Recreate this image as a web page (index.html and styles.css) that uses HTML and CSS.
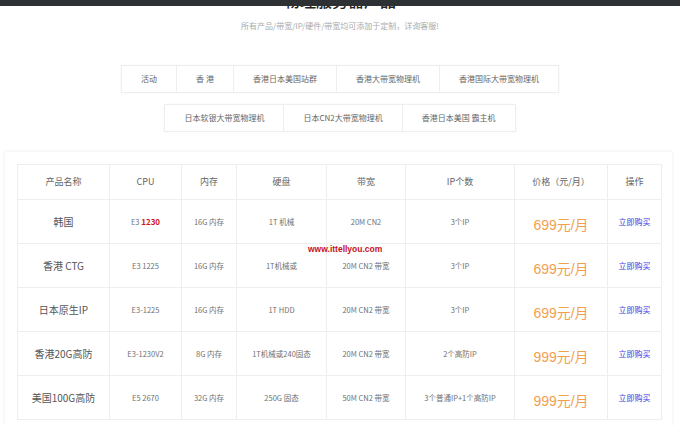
FILE: index.html
```html
<!DOCTYPE html>
<html lang="zh">
<head>
<meta charset="utf-8">
<title>物理服务器产品</title>
<link rel="stylesheet" href="styles.css">
</head>
<body>
<div class="topbar"></div>
<header class="intro">
  <h1 class="title">物理服务器产品</h1>
  <p class="subtitle">所有产品/带宽/IP/硬件/带宽均可添加于定制，详询客服!</p>
</header>
<nav class="tabs">
  <div class="tab-row">
    <span class="tab">活动</span>
    <span class="tab">香 港</span>
    <span class="tab">香港日本美国站群</span>
    <span class="tab">香港大带宽物理机</span>
    <span class="tab">香港国际大带宽物理机</span>
  </div>
  <div class="tab-row">
    <span class="tab">日本软银大带宽物理机</span>
    <span class="tab">日本CN2大带宽物理机</span>
    <span class="tab">香港日本美国 霸主机</span>
  </div>
</nav>
<section class="card">
  <table class="products">
    <colgroup>
      <col class="c1"><col class="c2"><col class="c3"><col class="c4"><col class="c5"><col class="c6"><col class="c7"><col class="c8">
    </colgroup>
    <thead>
      <tr><th>产品名称</th><th>CPU</th><th>内存</th><th>硬盘</th><th>带宽</th><th>IP个数</th><th>价格（元/月）</th><th>操作</th></tr>
    </thead>
    <tbody>
      <tr><td class="name">韩国</td><td>E3 <b class="hot">1230</b></td><td>16G 内存</td><td>1T 机械</td><td>20M CN2</td><td>3个IP</td><td><span class="price">699元/月</span></td><td><a class="buy">立即购买</a></td></tr>
      <tr><td class="name">香港 CTG</td><td>E3 1225</td><td>16G 内存</td><td>1T机械或</td><td>20M CN2 带宽</td><td>3个IP</td><td><span class="price">699元/月</span></td><td><a class="buy">立即购买</a></td></tr>
      <tr><td class="name">日本原生IP</td><td>E3-1225</td><td>16G 内存</td><td>1T HDD</td><td>20M CN2 带宽</td><td>3个IP</td><td><span class="price">699元/月</span></td><td><a class="buy">立即购买</a></td></tr>
      <tr><td class="name">香港20G高防</td><td>E3-1230V2</td><td>8G 内存</td><td>1T机械或240固态</td><td>20M CN2 带宽</td><td>2个高防IP</td><td><span class="price">999元/月</span></td><td><a class="buy">立即购买</a></td></tr>
      <tr><td class="name">美国100G高防</td><td>E5 2670</td><td>32G 内存</td><td>250G 固态</td><td>50M CN2 带宽</td><td>3个普通IP+1个高防IP</td><td><span class="price">999元/月</span></td><td><a class="buy">立即购买</a></td></tr>
    </tbody>
  </table>
  <span class="watermark">www.ittellyou.com</span>
</section>
</body>
</html>
```
FILE: styles.css
```css
html, body {
  margin: 0;
  padding: 0;
  background: #ffffff;
}
body {
  font-family: "Noto Sans CJK SC", "Liberation Sans", sans-serif;
  color: #666;
  overflow: hidden;
}
.topbar {
  position: fixed;
  top: 0;
  left: 0;
  right: 0;
  height: 6px;
  background: #2d3133;
  z-index: 10;
}
.intro {
  text-align: center;
}
.title {
  margin: -10px 0 0;
  font-size: 16px;
  line-height: 20px;
  font-weight: 500;
  color: #222;
}
.subtitle {
  margin: 11px 0 0;
  font-size: 8px;
  line-height: 10px;
  color: #aaa;
}
.tabs {
  margin-top: 34px;
  display: flex;
  flex-direction: column;
  align-items: center;
  gap: 11px;
}
.tab-row {
  display: flex;
  border: 1px solid #eee;
  box-shadow: 0 0 3px rgba(0,0,0,0.04);
  background: #fff;
}
.tab {
  height: 26px;
  line-height: 26px;
  padding: 0 19px;
  font-size: 8px;
  color: #666;
  border-left: 1px solid #eee;
  white-space: nowrap;
}
.tab:first-child {
  border-left: none;
}
.card {
  position: relative;
  margin: 20px 8px 0 5px;
  padding: 12px 11px 12px 12px;
  background: #fff;
  box-shadow: 0 0 4px rgba(0,0,0,0.08);
}
.products {
  width: 644px;
  border-collapse: collapse;
  table-layout: fixed;
}
.c1 { width: 92px; }
.c2 { width: 72px; }
.c3 { width: 55px; }
.c4 { width: 90px; }
.c5 { width: 79px; }
.c6 { width: 109px; }
.c7 { width: 93px; }
.c8 { width: 54px; }
.products th, .products td {
  border: 1px solid #eee;
  text-align: center;
  vertical-align: middle;
  padding: 0;
  white-space: nowrap;
  line-height: 12px;
}
.products th {
  height: 34px;
  font-size: 9px;
  font-weight: 400;
  color: #666;
}
.products td {
  height: 43px;
  font-size: 7.5px;
  color: #707070;
}
.products td.name {
  font-size: 10px;
  color: #555;
}
.hot {
  color: #d0151c;
  font-weight: 700;
  font-size: 8px;
}
.price {
  display: inline-block;
  padding-top: 6px;
  line-height: 16px;
  font-family: "Liberation Sans", "Noto Sans CJK SC", sans-serif;
  font-size: 14px;
  color: #f3a04e;
}
.buy {
  font-size: 8px;
  color: #3a3ae0;
  text-decoration: none;
}
.watermark {
  position: absolute;
  left: 303px;
  top: 92px;
  font-family: "Liberation Sans", sans-serif;
  font-weight: 700;
  font-size: 8.5px;
  color: #c8101a;
}
```
